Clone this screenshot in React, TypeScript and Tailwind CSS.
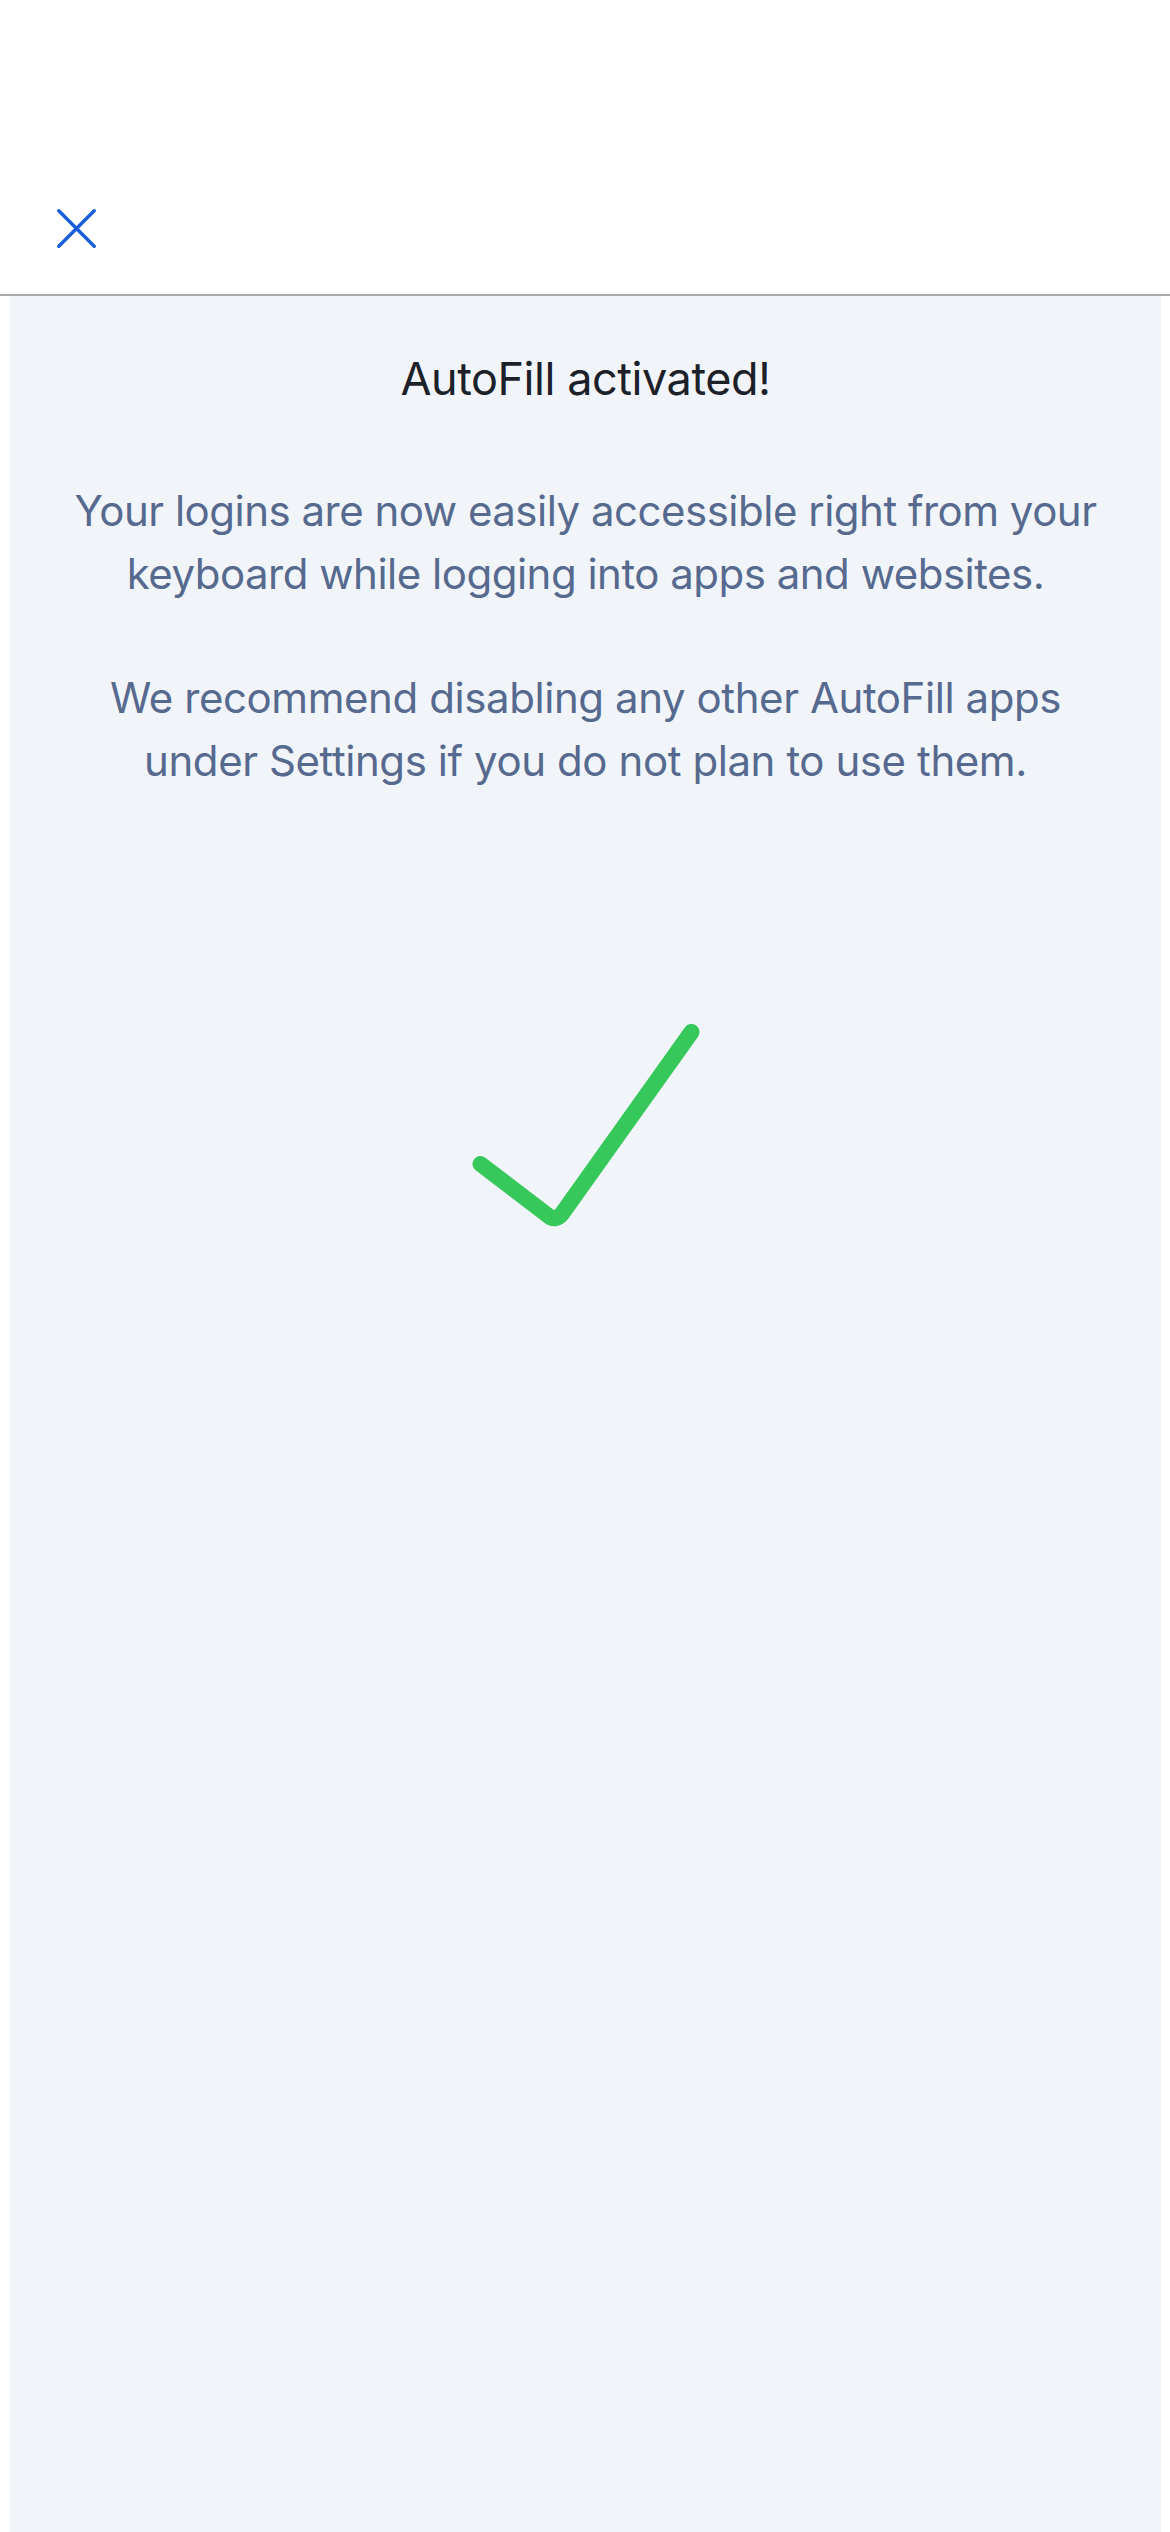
import React from "react";

export default function App() {
  return (
    <div className="w-[1170px] min-h-[2532px] bg-white flex flex-col" style={{ fontFamily: "Inter, 'Noto Sans', sans-serif" }}>
      <header className="h-[296px] shrink-0 bg-white border-b-2 border-[#a9a9a9] relative">
        <div className="absolute left-[57px] top-[209px] w-[39px] h-[39px]">
          <svg width="39" height="39" viewBox="0 0 39 39" fill="none">
            <path d="M1.8 1.8 L37.2 37.2 M37.2 1.8 L1.8 37.2" stroke="#175ddc" strokeWidth="3.4" strokeLinecap="round" />
          </svg>
        </div>
      </header>
      <div className="flex-1 flex pl-[10px] pr-[9px]">
        <main className="flex-1 bg-[#f1f5f9] flex flex-col items-center pt-[55px]">
          <h1 className="text-[45px] leading-[56px] text-[#1c2129] font-normal tracking-[-0.01em] text-center">AutoFill activated!</h1>
          <p className="mt-[72px] text-[42px] leading-[63px] text-[#56698f] text-center tracking-[-0.012em]">
            Your logins are now easily accessible right from your
            <br />
            keyboard while logging into apps and websites.
          </p>
          <p className="mt-[61px] text-[42px] leading-[63px] text-[#56698f] text-center tracking-[-0.01em]">
            We recommend disabling any other AutoFill apps
            <br />
            under Settings if you do not plan to use them.
          </p>
          <svg className="mt-[218px]" width="240" height="235" viewBox="0 0 240 235" fill="none">
            <path d="M14.5 154 L82 205.5 Q90 212 96.5 203 L225.5 22" stroke="#36c85b" strokeWidth="16" strokeLinecap="round" strokeLinejoin="round" />
          </svg>
        </main>
      </div>
    </div>
  );
}
